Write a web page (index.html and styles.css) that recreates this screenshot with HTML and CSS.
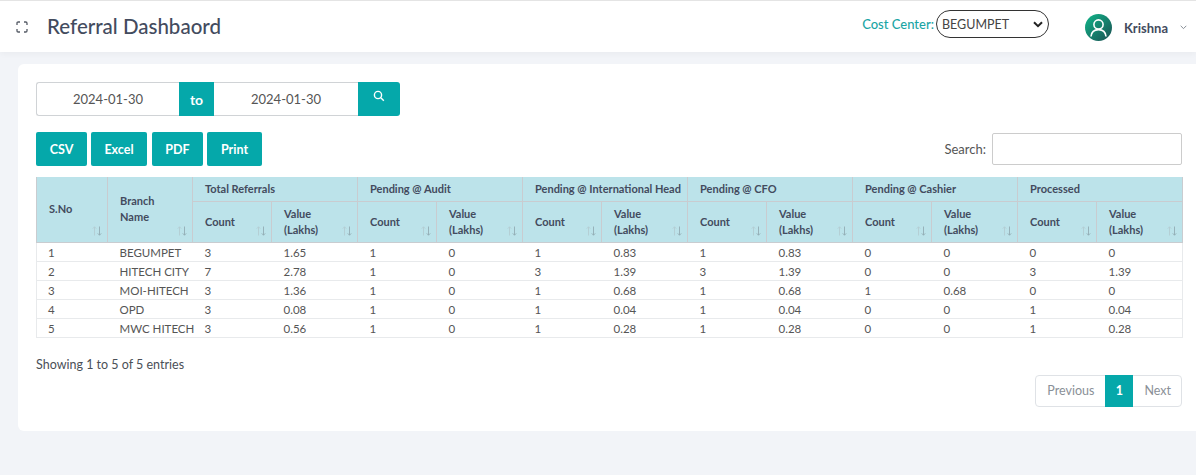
FILE: index.html
```html
<!DOCTYPE html>
<html lang="en">
<head>
    <meta charset="UTF-8">
    <title>Referral Dashboard</title>
    <link rel="stylesheet" href="styles.css">
</head>
<body>
    <svg class="sprite" width="0" height="0">
        <symbol id="sort-arrows" viewBox="0 0 10 10" fill="none" stroke-width="0.9">
            <path stroke="#b3cdd3" d="M2.5 9.5V0.8M0.8 2.6L2.5 0.8L4.2 2.6"/>
            <path stroke="#93adb4" d="M7.5 0.5V9.2M5.8 7.4L7.5 9.2L9.2 7.4"/>
        </symbol>
    </svg>

    <header class="topbar">
        <svg class="expand-icon" width="12" height="12" viewBox="0 0 12 12" fill="none" stroke="#555b66" stroke-width="1.3">
            <path d="M1 4V2.2Q1 1 2.2 1H4M8 1H9.8Q11 1 11 2.2V4M11 8V9.8Q11 11 9.8 11H8M4 11H2.2Q1 11 1 9.8V8"/>
        </svg>
        <h1 class="page-title">Referral Dashbaord</h1>
        <div class="cost-center">
            <label class="cost-label">Cost Center:</label>
            <div class="cost-select">BEGUMPET
                <svg width="10" height="7" viewBox="0 0 10 7" fill="none" stroke="#222" stroke-width="2"><path d="M1 1.2L5 5.2L9 1.2"/></svg>
            </div>
        </div>
        <div class="user">
            <svg class="avatar" width="27" height="27" viewBox="0 0 27 27" fill="none">
                <defs>
                    <linearGradient id="avatarFill" x1="0" y1="0" x2="1" y2="1">
                        <stop offset="0" stop-color="#0fb78a"/>
                        <stop offset="1" stop-color="#1d4f52"/>
                    </linearGradient>
                </defs>
                <circle cx="13.5" cy="13.5" r="13.5" fill="url(#avatarFill)"/>
                <circle cx="13.5" cy="10.5" r="4.6" stroke="#fff" stroke-width="1.6"/>
                <path d="M6 22.5C6.5 17.5 9.5 15.6 13.5 15.6S20.5 17.5 21 22.5" stroke="#fff" stroke-width="1.6"/>
            </svg>
            <span class="user-name">Krishna</span>
            <svg width="7" height="5" viewBox="0 0 7 5" fill="none" stroke="#7b818a" stroke-width="0.9"><path d="M0.7 0.8L3.5 3.6L6.3 0.8"/></svg>
        </div>
    </header>

    <main class="card">
        <div class="date-row">
            <div class="date-input">2024-01-30</div>
            <div class="date-to">to</div>
            <div class="date-input date-input-second">2024-01-30</div>
            <button class="search-btn">
                <svg width="12" height="12" viewBox="0 0 12 12" fill="none" stroke="#fff" stroke-width="1.4"><circle cx="5" cy="5" r="3.6"/><path d="M7.8 7.8L10.8 10.8"/></svg>
            </button>
        </div>

        <div class="tools-row">
            <button class="tool-btn btn-csv">CSV</button>
            <button class="tool-btn btn-excel">Excel</button>
            <button class="tool-btn btn-pdf">PDF</button>
            <button class="tool-btn btn-print">Print</button>
            <label class="search-label">Search:</label>
            <div class="search-box"></div>
        </div>

        <table class="report">
            <colgroup>
                <col class="col-sno"><col class="col-branch">
                <col class="col-count"><col class="col-value">
                <col class="col-count"><col class="col-value">
                <col class="col-count"><col class="col-value">
                <col class="col-count"><col class="col-value">
                <col class="col-count"><col class="col-value">
                <col class="col-count"><col class="col-value">
            </colgroup>
            <thead>
                <tr class="head-top">
                    <th rowspan="2" class="sortable">S.No<svg class="sort"><use href="#sort-arrows"/></svg></th>
                    <th rowspan="2" class="sortable">Branch Name<svg class="sort"><use href="#sort-arrows"/></svg></th>
                    <th colspan="2">Total Referrals</th>
                    <th colspan="2">Pending @ Audit</th>
                    <th colspan="2">Pending @ International Head</th>
                    <th colspan="2">Pending @ CFO</th>
                    <th colspan="2">Pending @ Cashier</th>
                    <th colspan="2">Processed</th>
                </tr>
                <tr class="head-sub">
                    <th class="sortable">Count<svg class="sort"><use href="#sort-arrows"/></svg></th><th class="sortable">Value (Lakhs)<svg class="sort"><use href="#sort-arrows"/></svg></th>
                    <th class="sortable">Count<svg class="sort"><use href="#sort-arrows"/></svg></th><th class="sortable">Value (Lakhs)<svg class="sort"><use href="#sort-arrows"/></svg></th>
                    <th class="sortable">Count<svg class="sort"><use href="#sort-arrows"/></svg></th><th class="sortable">Value (Lakhs)<svg class="sort"><use href="#sort-arrows"/></svg></th>
                    <th class="sortable">Count<svg class="sort"><use href="#sort-arrows"/></svg></th><th class="sortable">Value (Lakhs)<svg class="sort"><use href="#sort-arrows"/></svg></th>
                    <th class="sortable">Count<svg class="sort"><use href="#sort-arrows"/></svg></th><th class="sortable">Value (Lakhs)<svg class="sort"><use href="#sort-arrows"/></svg></th>
                    <th class="sortable">Count<svg class="sort"><use href="#sort-arrows"/></svg></th><th class="sortable">Value (Lakhs)<svg class="sort"><use href="#sort-arrows"/></svg></th>
                </tr>
            </thead>
            <tbody>
                <tr><td>1</td><td>BEGUMPET</td><td>3</td><td>1.65</td><td>1</td><td>0</td><td>1</td><td>0.83</td><td>1</td><td>0.83</td><td>0</td><td>0</td><td>0</td><td>0</td></tr>
                <tr><td>2</td><td>HITECH CITY</td><td>7</td><td>2.78</td><td>1</td><td>0</td><td>3</td><td>1.39</td><td>3</td><td>1.39</td><td>0</td><td>0</td><td>3</td><td>1.39</td></tr>
                <tr><td>3</td><td>MOI-HITECH</td><td>3</td><td>1.36</td><td>1</td><td>0</td><td>1</td><td>0.68</td><td>1</td><td>0.68</td><td>1</td><td>0.68</td><td>0</td><td>0</td></tr>
                <tr><td>4</td><td>OPD</td><td>3</td><td>0.08</td><td>1</td><td>0</td><td>1</td><td>0.04</td><td>1</td><td>0.04</td><td>0</td><td>0</td><td>1</td><td>0.04</td></tr>
                <tr><td>5</td><td>MWC HITECH</td><td>3</td><td>0.56</td><td>1</td><td>0</td><td>1</td><td>0.28</td><td>1</td><td>0.28</td><td>0</td><td>0</td><td>1</td><td>0.28</td></tr>
            </tbody>
        </table>

        <div class="entries">Showing 1 to 5 of 5 entries</div>

        <div class="pager">
            <div class="pager-group">
                <span class="page-link">Previous</span>
                <span class="page-current">1</span>
                <span class="page-link page-next">Next</span>
            </div>
        </div>
    </main>
</body>
</html>
```

FILE: styles.css
```css
* {
    box-sizing: border-box;
}
body {
    margin: 0;
    height: 475px;
    overflow: hidden;
    font-family: Lato, "Open Sans", sans-serif;
    background-color: #f2f4f8;
    color: #4a4f57;
}
.sprite {
    display: block;
}
.topbar {
    height: 52px;
    background: #fff;
    border-top: 1px solid #e4e4e4;
    display: flex;
    align-items: center;
    padding: 0 9px 0 16px;
    box-shadow: 0 2px 6px rgba(0, 0, 0, 0.04);
}
.expand-icon {
    margin-right: 19px;
}
.page-title {
    margin: -2px 0 0 0;
    font-size: 20.5px;
    font-weight: 500;
    color: #434b5e;
}
.cost-center {
    margin-left: auto;
    display: flex;
    align-items: center;
    margin-top: -5px;
}
.cost-label {
    font-size: 13px;
    font-weight: 500;
    color: #1aa5a5;
}
.cost-select {
    width: 113px;
    height: 28px;
    margin-left: 2px;
    border: 1px solid #333;
    border-radius: 14px;
    padding: 0 5px 0 5px;
    display: flex;
    align-items: center;
    justify-content: space-between;
    font-size: 12.5px;
    color: #444;
}
.user {
    display: flex;
    align-items: center;
    margin-left: 36px;
    margin-top: 2px;
}
.user-name {
    margin: 0 12px 0 12px;
    font-size: 13px;
    font-weight: 700;
    color: #434b5e;
}
.card {
    margin: 12px 0 0 18px;
    height: 367px;
    background: #fff;
    border-radius: 6px 0 0 6px;
    padding: 18px 14px 0 18px;
}
.date-row {
    display: flex;
    height: 34px;
}
.date-input {
    width: 143px;
    height: 34px;
    border: 1px solid #d0d3d6;
    border-right: none;
    border-radius: 3px 0 0 3px;
    text-align: center;
    line-height: 32px;
    font-size: 13px;
    color: #555;
}
.date-input-second {
    width: 144px;
    border-left: none;
    border-radius: 0;
}
.date-to {
    width: 35px;
    background: #05a8aa;
    color: #fff;
    font-size: 14px;
    font-weight: 700;
    text-align: center;
    line-height: 35px;
}
.search-btn {
    width: 42px;
    height: 34px;
    border: none;
    padding: 0 0 4px 0;
    background: #05a8aa;
    border-radius: 0 3px 3px 0;
}
.tools-row {
    display: flex;
    align-items: center;
    margin-top: 16px;
    height: 34px;
}
.tool-btn {
    height: 34px;
    border: none;
    border-radius: 2px;
    background: #05a8aa;
    color: #fff;
    font-family: inherit;
    font-size: 12.5px;
    font-weight: 700;
    padding: 0;
    margin-right: 4px;
}
.btn-csv {
    width: 51px;
}
.btn-excel {
    width: 56px;
    margin-right: 5px;
}
.btn-pdf {
    width: 51px;
}
.btn-print {
    width: 55px;
}
.search-label {
    margin-left: auto;
    font-size: 13px;
    color: #555;
}
.search-box {
    width: 190px;
    height: 32px;
    margin-left: 6px;
    border: 1px solid #ccc;
    border-radius: 2px;
}
.report {
    width: 1146px;
    margin-top: 11px;
    table-layout: fixed;
    border-collapse: collapse;
    font-size: 11.5px;
}
.col-sno {
    width: 71px;
}
.col-branch {
    width: 85px;
}
.col-count {
    width: 79px;
}
.col-value {
    width: 86px;
}
.report th {
    background: #bce3ea;
    border: 1px solid #c9ccd0;
    border-top: none;
    padding: 0 28px 0 12px;
    text-align: left;
    font-size: 11px;
    font-weight: 700;
    line-height: 16px;
    color: #434b5e;
}
.report th.sortable {
    position: relative;
}
.head-top th {
    height: 24px;
}
.head-top th[colspan] {
    padding-right: 0;
    white-space: nowrap;
}
.head-sub th {
    height: 41px;
}
.sort {
    position: absolute;
    right: 5px;
    bottom: 6px;
    width: 10px;
    height: 10px;
}
.report td {
    height: 19px;
    padding: 1px 11px 0 12px;
    border-bottom: 1px solid #e8eaec;
    line-height: 17px;
    white-space: nowrap;
    color: #555;
}
.report tbody tr td:first-child {
    padding-left: 11px;
    border-left: 1px solid #e8eaec;
}
.report tbody tr td:last-child {
    border-right: 1px solid #e8eaec;
}
.entries {
    margin-top: 19px;
    font-size: 12.5px;
    color: #4a4f57;
}
.pager {
    display: flex;
    justify-content: flex-end;
    margin-top: 3px;
}
.pager-group {
    display: flex;
    height: 32px;
    border: 1px solid #dfe2e6;
    border-radius: 4px;
    font-size: 12.5px;
    line-height: 30px;
}
.page-link {
    padding: 0 11px;
    color: #8a9097;
}
.page-next {
    padding-right: 10px;
}
.page-current {
    width: 28px;
    margin: -1px 0;
    line-height: 32px;
    text-align: center;
    background: #05a8aa;
    color: #fff;
    font-weight: 700;
}
```
